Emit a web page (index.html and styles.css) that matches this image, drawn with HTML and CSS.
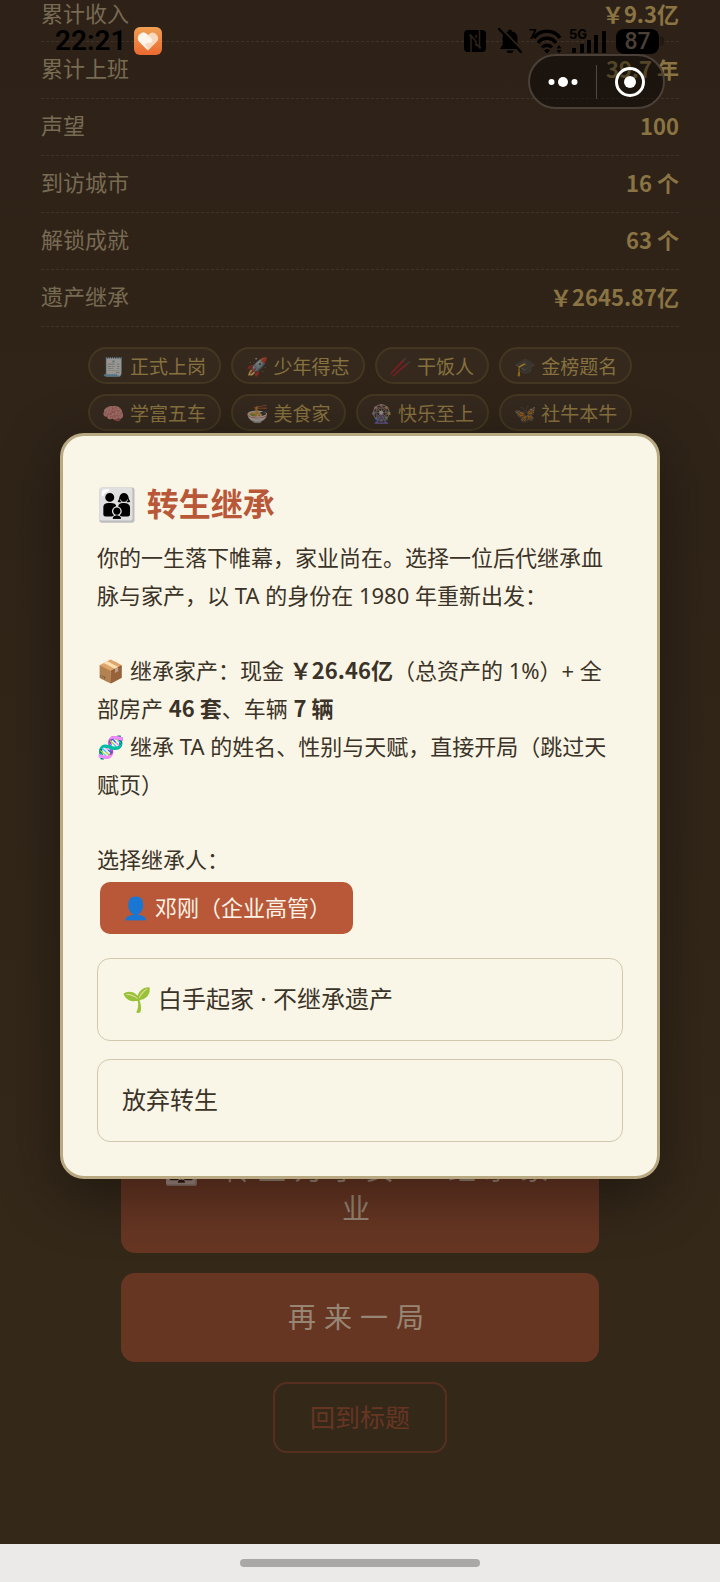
FILE: index.html
```html
<!DOCTYPE html>
<html lang="zh-CN">
<head>
<meta charset="utf-8">
<meta name="viewport" content="width=device-width, initial-scale=1">
<title>转生继承</title>
<link rel="stylesheet" href="styles.css">
</head>
<body>
<div class="page">
  <main class="summary">
    <dl class="stats">
      <div class="stat"><dt>累计收入</dt><dd>￥9.3亿</dd></div>
      <div class="stat"><dt>累计上班</dt><dd>39.7 年</dd></div>
      <div class="stat"><dt>声望</dt><dd>100</dd></div>
      <div class="stat"><dt>到访城市</dt><dd>16 个</dd></div>
      <div class="stat"><dt>解锁成就</dt><dd>63 个</dd></div>
      <div class="stat"><dt>遗产继承</dt><dd>￥2645.87亿</dd></div>
    </dl>
    <ul class="chips">
      <li class="chip"><span class="chip-icon">🧾</span>正式上岗</li>
      <li class="chip"><span class="chip-icon">🚀</span>少年得志</li>
      <li class="chip"><span class="chip-icon">🥢</span>干饭人</li>
      <li class="chip"><span class="chip-icon">🎓</span>金榜题名</li>
      <li class="chip"><span class="chip-icon">🧠</span>学富五车</li>
      <li class="chip"><span class="chip-icon">🍜</span>美食家</li>
      <li class="chip"><span class="chip-icon">🎡</span>快乐至上</li>
      <li class="chip"><span class="chip-icon">🦋</span>社牛本牛</li>
    </ul>
    <div class="actions">
      <button class="action" type="button"><span class="dim">👨‍👩‍👦</span> 转生为子女 · 继承家业</button>
      <button class="action" type="button">再来一局</button>
      <button class="action-outline" type="button">回到标题</button>
    </div>
  </main>
  <footer class="home-bar"><span class="home-indicator"></span></footer>
</div>

<div class="overlay">
  <section class="dialog" role="dialog" aria-modal="true" aria-labelledby="dialog-title">
    <h1 class="dialog-title" id="dialog-title"><span class="title-icon">👨‍👩‍👦</span>转生继承</h1>
    <p class="text">你的一生落下帷幕，家业尚在。选择一位后代继承血脉与家产，以 TA 的身份在 1980 年重新出发：</p>
    <p class="text">📦 继承家产：现金 <strong>￥26.46亿</strong>（总资产的 1%）+ 全部房产 <strong>46 套</strong>、车辆 <strong>7 辆</strong><br>🧬 继承 TA 的姓名、性别与天赋，直接开局（跳过天赋页）</p>
    <p class="text">选择继承人：</p>
    <button class="heir" type="button">👤 邓刚（企业高管）</button>
    <div class="options">
      <button class="option" type="button">🌱 白手起家 · 不继承遗产</button>
      <button class="option" type="button">放弃转生</button>
    </div>
  </section>
</div>

<div class="status">
  <span class="time">22:21</span>
  <svg class="app-icon" width="28" height="28" viewBox="0 0 28 28" aria-hidden="true">
    <defs><linearGradient id="orange" x1="0" y1="0" x2="0" y2="1"><stop offset="0" stop-color="#f0a052"/><stop offset="1" stop-color="#ea6a31"/></linearGradient></defs>
    <rect width="28" height="28" rx="6" fill="url(#orange)"/>
    <path d="M14 23.500L5 14.500A5.500 5.500 0 0 1 12.500 6.700L14 8.200L15.500 6.700A5.500 5.500 0 0 1 23 14.500Z" fill="#fbd9bd"/>
    <path d="M14 23.500L5 14.500A5.500 5.500 0 0 1 12.500 6.700L18 12Q19 15 16 16Q13 15.500 11 17Z" fill="#fff5ea"/>
  </svg>
  <div class="status-icons">
    <svg width="22" height="24" viewBox="0 0 22 24" aria-hidden="true">
      <rect y="1" width="22" height="22" rx="4" fill="#000"/>
      <path d="M7 23V6.500L12 12.500V17M12 9V6M7 6.500H5M15.500 1V18.500L12 14.500M15.500 18.500H17" fill="none" stroke="#2e2218" stroke-width="1.500"/>
    </svg>
    <svg class="bell" width="24" height="26" viewBox="0 0 24 26" aria-hidden="true">
      <path d="M12 1.500a2 2 0 0 1 2 2a7 7 0 0 1 5.500 7V17l2.500 4H2l2.500-4v-6.500a7 7 0 0 1 5.500-7a2 2 0 0 1 2-2zM8.500 22.500h7a3.500 2.500 0 0 1-7 0z" fill="#000"/>
      <path d="M3 0L24 22" stroke="#2e2218" stroke-width="2"/>
      <path d="M1 1L23 24" stroke="#000" stroke-width="2.500" stroke-linecap="round"/>
    </svg>
    <svg class="wifi" width="34" height="28" viewBox="0 0 34 28" aria-hidden="true">
      <text x="0" y="12" class="tiny">7</text>
      <g fill="none" stroke="#000" stroke-width="3.500"><path d="M5 11a16 16 0 0 1 26 0"/><path d="M9 16a11 11 0 0 1 18 0"/><path d="M13 20.500a6.500 6.500 0 0 1 10 0"/></g>
      <path d="M15 23.500a4 4 0 0 1 6 0l-3 3zM30 18l2.500 3.500h-5zM30 26.500l2.500-3.500h-5z" fill="#000"/>
    </svg>
    <svg class="signal" width="38" height="28" viewBox="0 0 38 28" aria-hidden="true">
      <text x="0" y="12" class="tiny">5G</text>
      <path d="M3 21h4v5H3zM11 17h4v9h-4zM18 13h4v13h-4zM25 8h4v18h-4zM33 4h4v22h-4z" fill="#000"/>
    </svg>
    <span class="battery">87</span>
    <span class="battery-tip"></span>
  </div>
</div>

<div class="capsule">
  <button class="capsule-btn" type="button" aria-label="更多">
    <svg width="30" height="30" viewBox="0 0 30 30"><g fill="#fff"><circle cx="3.500" cy="15" r="3"/><circle cx="15" cy="15" r="5"/><circle cx="26.500" cy="15" r="3"/></g></svg>
  </button>
  <span class="capsule-line"></span>
  <button class="capsule-btn" type="button" aria-label="关闭">
    <svg width="30" height="30" viewBox="0 0 30 30"><circle cx="15" cy="15" r="13.500" fill="none" stroke="#fff" stroke-width="3"/><circle cx="15" cy="15" r="6" fill="#fff"/></svg>
  </button>
</div>
</body>
</html>
```
FILE: styles.css
```css
* { box-sizing: border-box; }

body {
  margin: 0;
  font-family: "Noto Sans", "Noto Sans CJK SC", "Noto Color Emoji", sans-serif;
  font-size: 22px;
  background: #2e2218;
}

button { font-family: inherit; cursor: pointer; }

.page {
  min-height: 100vh;
  display: flex;
  flex-direction: column;
  background: linear-gradient(#2e2218, #342819 80%);
}

.summary {
  flex: 1;
  display: flex;
  flex-direction: column;
  padding: 0 41px 91px;
}

.stats { margin: 0; }

.stat {
  display: flex;
  justify-content: space-between;
  padding: 13px 0 17px;
  border-bottom: 1px dashed #3f3226;
  line-height: 26px;
}

.stat:first-child { padding: 0 0 15px; }
.stat dt { color: #786b53; }
.stat dd { margin: 0; color: #8a7443; font-weight: 700; }
.stat dd, .text strong { font-family: "Noto Sans CJK SC", sans-serif; }
.text strong { line-height: 1; }

.chips {
  display: flex;
  flex-wrap: wrap;
  justify-content: center;
  gap: 10px;
  margin: 0;
  padding: 20px 40px 0;
  list-style: none;
}

.chip {
  display: flex;
  align-items: center;
  gap: 5px;
  height: 37px;
  padding: 0 13px;
  border: 2px solid #443721;
  border-radius: 19px;
  background: #35291e;
  color: #86713f;
  font-size: 19px;
}

.chip-icon, .dim { opacity: 0.5; }
.chip-icon { font-size: 18px; }

.actions {
  display: flex;
  flex-direction: column;
  align-items: center;
  gap: 20px;
  margin-top: auto;
  padding: 0 80px;
}

.action {
  width: 100%;
  padding: 25px 28px;
  border: 0;
  border-radius: 14px;
  background: #673623;
  color: #978674;
  font-size: 28px;
  line-height: 39px;
  letter-spacing: 8px;
}

.action-outline {
  padding: 16px 35px;
  border: 2px solid #572f20;
  border-radius: 14px;
  background: transparent;
  color: #673623;
  font-size: 25px;
  line-height: 35px;
}

.home-bar {
  display: flex;
  align-items: center;
  justify-content: center;
  height: 38px;
  background: #ebeae8;
}

.home-indicator {
  width: 240px;
  height: 8px;
  border-radius: 4px;
  background: #a9a8a6;
}

.overlay {
  position: absolute;
  inset: 0;
  display: grid;
  align-items: center;
  padding: 30px 60px 0;
}

.dialog {
  padding: 34px;
  border: 3px solid #b9a983;
  border-radius: 24px;
  background: #faf6e7;
  color: #3b3328;
  box-shadow: 0 16px 60px rgba(0, 0, 0, 0.4);
}

.dialog-title {
  display: flex;
  align-items: center;
  gap: 10px;
  margin: 0;
  color: #b85838;
  font-size: 32px;
  line-height: 68px;
}

.text { margin: 0 0 37px; padding-right: 8px; line-height: 38px; }
.text:last-of-type { margin-bottom: 4px; }

.heir {
  display: block;
  margin: 0 3px 24px;
  padding: 0 22px 2px;
  border: 0;
  border-radius: 10px;
  background: #b85838;
  color: #fdf3e6;
  font-size: 22px;
  line-height: 50px;
}

.options { display: grid; gap: 18px; }

.option {
  padding: 0 24px 2px;
  border: 1px solid #d2c8ae;
  border-radius: 13px;
  background: transparent;
  color: #3b3328;
  font-size: 24px;
  line-height: 79px;
  text-align: left;
}

.status {
  position: absolute;
  top: 26px;
  left: 55px;
  right: 55px;
  display: flex;
  align-items: center;
  color: #000;
}

.time {
  margin-right: 7px;
  font-family: Roboto, sans-serif;
  font-size: 28px;
  font-weight: 600;
  line-height: 30px;
}

.status-icons {
  display: flex;
  align-items: center;
  margin-left: auto;
}

.bell { margin-left: 12px; }
.wifi { margin-left: 7px; }
.signal { margin-left: 6px; }
.tiny { font: 700 13px Inter, sans-serif; }

.battery {
  width: 43px;
  margin-left: 9px;
  border-radius: 8px;
  background: #000;
  color: #4a4038;
  font: 500 23px/25px Roboto, sans-serif;
  text-align: center;
}

.battery-tip {
  width: 4px;
  height: 10px;
  margin: 0 1px;
  border-radius: 0 4px 4px 0;
  background: #221911;
}

.capsule {
  position: absolute;
  top: 54px;
  right: 55px;
  display: flex;
  align-items: center;
  width: 137px;
  height: 55px;
  border: 2px solid #4b4037;
  border-radius: 28px;
  background: rgba(0, 0, 0, 0.4);
}

.capsule-btn {
  flex: 1;
  display: grid;
  place-items: center;
  padding: 0;
  border: 0;
  background: transparent;
}

.capsule-line { width: 1px; height: 34px; background: #51473e; }
```
